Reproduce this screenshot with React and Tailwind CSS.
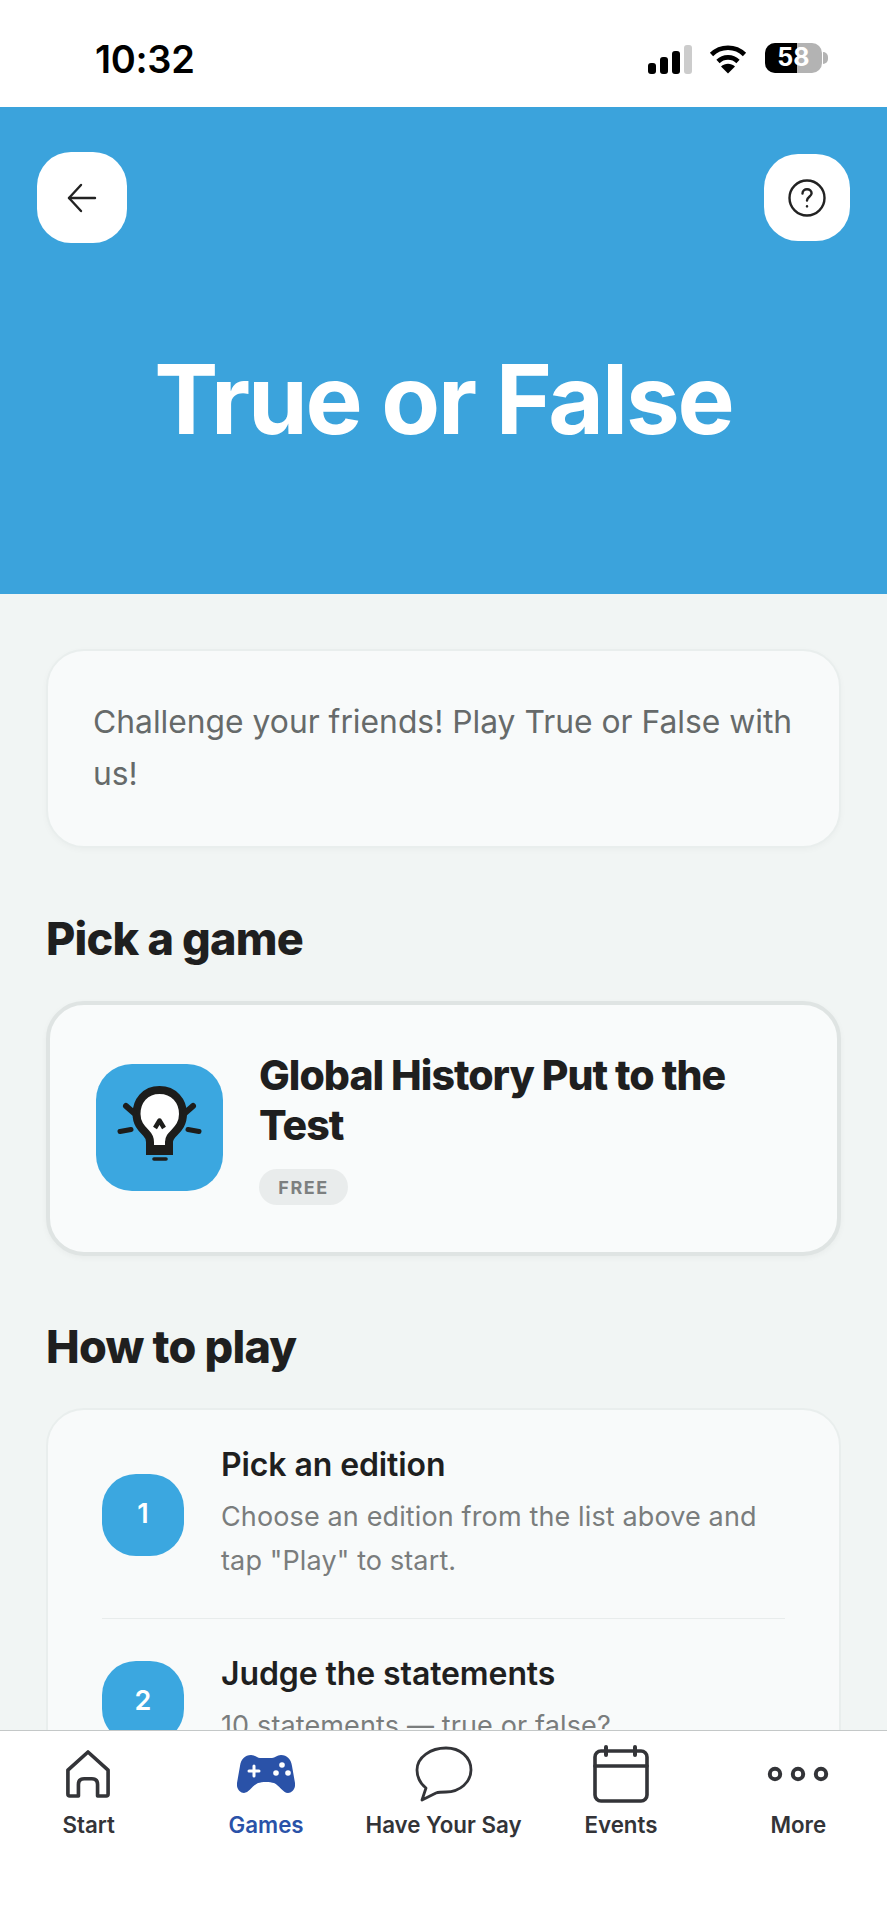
import React from "react";

const StatusBar = () => {
  return (
    <div className="h-[107px] shrink-0 bg-white flex items-start justify-between pl-[95px] pr-[59px]">
      <span className="mt-[37px] text-[38px] leading-[44px] font-semibold text-black tracking-[-0.3px]">10:32</span>
      <div className="mt-[43px] flex items-start">
        <svg width="44" height="29" viewBox="0 0 44 29" className="mt-[2px]">
          <rect x="0" y="18" width="8" height="11" rx="3" fill="#000" />
          <rect x="12" y="12" width="8" height="17" rx="3" fill="#000" />
          <rect x="24" y="6" width="8" height="23" rx="3" fill="#000" />
          <rect x="36" y="0" width="8" height="29" rx="3" fill="#ccc" />
        </svg>
        <svg width="38" height="30" viewBox="0 0 38 30" className="ml-[17px] mt-[1px]" fill="none">
          <path d="M2.5 10.5C11.5 1.5 26.5 1.5 35.5 10.5" stroke="#000" strokeWidth="4.6" strokeLinecap="butt" />
          <path d="M9 17.5C14.5 12 23.5 12 29 17.5" stroke="#000" strokeWidth="4.6" />
          <path d="M19 29.5L12 22.5C16 18.8 22 18.8 26 22.5Z" fill="#000" />
        </svg>
        <div className="ml-[18px] relative w-[57px] h-[30px] rounded-[10px] bg-[#b3b3b3] overflow-hidden">
          <div className="h-full w-[32px] bg-black" />
          <span className="absolute inset-0 flex items-center justify-center text-[25px] font-bold text-white">58</span>
        </div>
        <div className="ml-[1px] mt-[9px] w-[5px] h-[12px] rounded-r-full bg-[#b3b3b3]" />
      </div>
    </div>
  );
};

const Hero = () => {
  return (
    <div className="h-[487px] shrink-0 bg-[#3ba3dc] flex flex-col">
      <div className="flex items-start justify-between pl-[37px] pr-[37px] pt-[45px]">
        <button className="w-[90px] h-[91px] rounded-[34px] bg-white flex items-center justify-center">
          <svg width="32" height="32" viewBox="0 0 32 32" fill="none" stroke="#222" strokeWidth="2.4" strokeLinecap="round" strokeLinejoin="round">
            <path d="M29 16H3" />
            <path d="M15 3L3 16L15 29" />
          </svg>
        </button>
        <button className="mt-[2px] w-[86px] h-[87px] rounded-[34px] bg-white flex items-center justify-center">
          <svg width="38" height="38" viewBox="0 0 38 38" fill="none" stroke="#222" strokeWidth="2.4" strokeLinecap="round" strokeLinejoin="round">
            <circle cx="19" cy="19" r="17.5" />
            <path d="M14.5 14.5C14.5 11.8 16.6 10.2 19 10.2C21.6 10.2 23.6 11.9 23.6 14.3C23.6 17.6 19 18 19 21.5" />
            <path d="M19 27.2V27.4" />
          </svg>
        </button>
      </div>
      <h1 className="mt-[98px] text-center text-[96px] leading-[116px] font-bold text-white tracking-[-2.1px]">True or False</h1>
    </div>
  );
};

const BulbLogo = () => {
  return (
    <svg width="127" height="127" viewBox="0 0 127 127" fill="none">
      <path d="M63.500 26C49 26 40.500 37 40.500 50C40.500 59 45 64 50 69C53 72 54 74 54 78V85H73V78C73 74 75 72 78 69C83 64 87 59 87 50C87 37 78 26 63.500 26Z" fill="#fff" stroke="#1d1d1b" strokeWidth="8" strokeLinejoin="round" />
      <path d="M50 82H77V91H50Z" fill="#1d1d1b" />
      <path d="M59 64L63.500 56.500L68 64" stroke="#1d1d1b" strokeWidth="4.500" strokeLinejoin="round" />
      <path d="M30 42L38 49" stroke="#1d1d1b" strokeWidth="6" strokeLinecap="round" />
      <path d="M97 42L89 49" stroke="#1d1d1b" strokeWidth="6" strokeLinecap="round" />
      <path d="M24 67.500L35 65.500" stroke="#1d1d1b" strokeWidth="5" strokeLinecap="round" />
      <path d="M103 67.500L92 65.500" stroke="#1d1d1b" strokeWidth="5" strokeLinecap="round" />
      <path d="M58 95H70" stroke="#1d1d1b" strokeWidth="3.600" strokeLinecap="round" />
    </svg>
  );
};

const Step = ({ n, title, desc }) => {
  return (
    <div className="flex items-center">
      <div className="mt-[3px] w-[82px] h-[82px] shrink-0 rounded-[34px] bg-[#3ba7e0] flex items-center justify-center text-[27px] font-semibold text-white">
        {n}
      </div>
      <div className="ml-[37px]">
        <h3 className="text-[32px] leading-[44px] font-semibold text-[#1f1f1f] tracking-[-0.1px]">{title}</h3>
        <p className="mt-[8px] text-[27px] leading-[44px] text-[#7a7d7d] tracking-[0.13px]">{desc}</p>
      </div>
    </div>
  );
};

const Main = () => {
  return (
    <div className="flex-1 min-h-0 overflow-hidden bg-[#f1f5f4] px-[46px] pt-[55px]">
      <div className="h-[199px] rounded-[38px] bg-[#f8fafa] border-2 border-[#e9eeed] shadow-[0_2px_6px_rgba(0,0,0,0.03)] pl-[45px] pr-[30px] pt-[45px]">
        <p className="text-[31.800px] leading-[52px] text-[#666a6a]">Challenge your friends! Play True or False with us!</p>
      </div>
      <h2 className="mt-[63px] text-[45px] leading-[56px] font-extrabold text-[#1f1f1f] tracking-[-0.8px]">Pick a game</h2>
      <div className="mt-[34px] h-[255px] rounded-[38px] bg-[#f9fbfb] border-4 border-[#dfe4e3] shadow-[0_2px_6px_rgba(0,0,0,0.04)] flex items-start pl-[46px] pt-[59px]">
        <div className="w-[127px] h-[127px] shrink-0 rounded-[36px] bg-[#3ba7e0]">
          <BulbLogo />
        </div>
        <div className="ml-[36px] -mt-[14px]">
          <h3 className="w-[490px] text-[41px] leading-[50px] font-extrabold text-[#1f1f1f] tracking-[-1px]">Global History Put to the Test</h3>
          <span className="mt-[19px] w-[89px] h-[36px] rounded-full bg-[#e9ecec] flex items-center justify-center text-[18px] font-bold tracking-[1.5px] text-[#7d8080]">FREE</span>
        </div>
      </div>
      <h2 className="mt-[63px] text-[45px] leading-[56px] font-extrabold text-[#1f1f1f] tracking-[-0.8px]">How to play</h2>
      <div className="mt-[33px] rounded-[38px] bg-[#f8fafa] border-2 border-[#e9eeed] px-[54px] pt-[33px] pb-[30px]">
        <Step n="1" title="Pick an edition" desc={'Choose an edition from the list above and tap "Play" to start.'} />
        <div className="mt-[35px] mb-[33px] h-[1px] bg-[#e8ecec]" />
        <Step n="2" title="Judge the statements" desc="10 statements — true or false?" />
      </div>
    </div>
  );
};

const NavItem = ({ label, active, children }) => {
  return (
    <div className="flex-1 flex flex-col items-center">
      <div className="h-[60px] flex items-center justify-center">{children}</div>
      <span className={`mt-[6px] text-[22.300px] leading-[30px] font-semibold ${active ? "text-[#2a52a8]" : "text-[#333438]"}`}>{label}</span>
    </div>
  );
};

const BottomNav = () => {
  return (
    <div className="h-[190px] shrink-0 bg-white border-t border-[#c4c8c8] flex items-start pt-[13px]">
      <NavItem label="Start">
        <svg width="44" height="48" viewBox="0 0 46 50" fill="none" stroke="#333438" strokeWidth="3.800" strokeLinejoin="round" className="-ml-[2px]">
          <path d="M23 2L44 21V46C44 47.200 43.200 48 42 48H33V36C33 32 30.500 30 27 30H19C15.500 30 13 32 13 36V48H4C2.800 48 2 47.200 2 46V21L23 2Z" />
        </svg>
      </NavItem>
      <NavItem label="Games" active>
        <svg width="58" height="39" viewBox="0 0 58 39">
          <path d="M14 0C18 0 20 3 23 3H35C38 3 40 0 44 0C50 0 54 4 55 11L58 28C58.800 34 55 38 51 38C46 38 42 30 37 28C33 26.500 25 26.500 21 28C16 30 12 38 7 38C3 38 -0.800 34 0 28L3 11C4 4 8 0 14 0Z" fill="#2a52a8" />
          <path d="M17 11V21M12 16H22" stroke="#fff" strokeWidth="3" strokeLinecap="round" />
          <circle cx="45" cy="10" r="2.800" fill="#fff" />
          <circle cx="39" cy="18" r="2.800" fill="#fff" />
          <circle cx="51" cy="18" r="2.800" fill="#fff" />
        </svg>
      </NavItem>
      <NavItem label="Have Your Say">
        <svg width="58" height="56" viewBox="0 0 58 56" fill="none" stroke="#333438" strokeWidth="2.800" strokeLinejoin="round">
          <path d="M31 2C45 2 56 11 56 24C56 36 45 46 31 46C28 46 24 46 21 47L7 54L11 42C6 38 2 31 2 24C2 11 16 2 31 2Z" />
        </svg>
      </NavItem>
      <NavItem label="Events">
        <svg width="56" height="58" viewBox="0 0 56 58" fill="none" stroke="#333438" strokeLinecap="round" strokeLinejoin="round">
          <rect x="2" y="6" width="52" height="50" rx="6" strokeWidth="3.600" />
          <path d="M2 21H54" strokeWidth="3.600" />
          <path d="M13 2V10M42 2V10" strokeWidth="4" />
        </svg>
      </NavItem>
      <NavItem label="More">
        <svg width="62" height="16" viewBox="0 0 62 16" fill="none" stroke="#333438" strokeWidth="4">
          <circle cx="8" cy="8" r="5.200" />
          <circle cx="31" cy="8" r="5.200" />
          <circle cx="54" cy="8" r="5.200" />
        </svg>
      </NavItem>
    </div>
  );
};

const App = () => {
  return (
    <div className="h-[1920px] w-[887px] flex flex-col overflow-hidden bg-white font-['Inter',sans-serif]">
      <StatusBar />
      <Hero />
      <Main />
      <BottomNav />
    </div>
  );
};

export default App;
